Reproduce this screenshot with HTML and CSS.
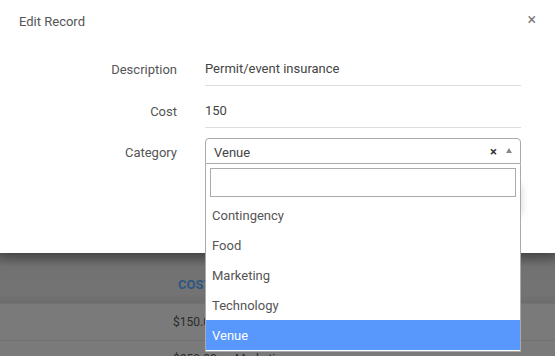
FILE: index.html
```html
<!DOCTYPE html>
<html>
<head>
<meta charset="utf-8">
<link rel="stylesheet" href="styles.css">
</head>
<body>
<div class="screen">
  <div class="modal">
    <div class="modal-header">
      <span class="modal-title">Edit Record</span>
      <span class="modal-close">×</span>
    </div>
    <div class="modal-body">
      <div class="form-row">
        <label class="form-label">Description</label>
        <div class="form-input">Permit/event insurance</div>
      </div>
      <div class="form-row">
        <label class="form-label">Cost</label>
        <div class="form-input">150</div>
      </div>
      <div class="form-row form-row-select">
        <label class="form-label form-label-select">Category</label>
        <div class="select-wrap">
          <div class="select-box">
            <span class="select-value">Venue</span>
            <span class="select-clear">×</span>
            <span class="select-arrow"></span>
          </div>
          <div class="dropdown">
            <div class="dropdown-search"></div>
            <ul class="dropdown-list">
              <li class="dropdown-option">Contingency</li>
              <li class="dropdown-option">Food</li>
              <li class="dropdown-option">Marketing</li>
              <li class="dropdown-option">Technology</li>
              <li class="dropdown-option is-active">Venue</li>
            </ul>
          </div>
        </div>
      </div>
      <div class="modal-footer">
        <div class="save-btn"></div>
      </div>
    </div>
  </div>
  <div class="table">
    <div class="table-head">
      <div class="cell cell-cost head-cost">COST</div>
    </div>
    <div class="table-row">
      <div class="cell cell-cost">$150.00</div>
      <div class="cell cell-cat">Venue</div>
    </div>
    <div class="table-row">
      <div class="cell cell-cost">$250.00</div>
      <div class="cell cell-cat">Marketing</div>
    </div>
  </div>
</div>
</body>
</html>
```
FILE: styles.css
```css
* { box-sizing: border-box; }
html, body { margin: 0; padding: 0; }
body {
  width: 555px;
  height: 356px;
  overflow: hidden;
  font-family: Roboto, "Liberation Sans", Arial, sans-serif;
  font-size: 13px;
  background: #7a7a7a;
}
.screen { position: relative; width: 555px; height: 356px; overflow: hidden; }

.modal {
  position: relative;
  z-index: 2;
  height: 253px;
  background: #fff;
  box-shadow: 0 3px 12px rgba(0,0,0,0.35);
}
.modal-header {
  display: flex;
  justify-content: space-between;
  align-items: center;
  height: 42px;
  padding: 0 19px 0 19px;
}
.modal-title { color: #555; font-size: 13px; }
.modal-close { color: #777; font-size: 16px; margin-top: -4px; margin-right: 0; }

.modal-body { padding-top: 11px; }
.form-row {
  display: grid;
  grid-template-columns: 177px 316px;
  column-gap: 28px;
  align-items: center;
  margin-bottom: 9px;
}
.form-label { text-align: right; color: #555; }
.form-label-select { padding-top: 3px; }
.form-input {
  height: 33px;
  line-height: 32px;
  color: #444;
  border-bottom: 1px solid #ddd;
}
.form-row-select { margin-top: 10px; }

.select-wrap { position: relative; }
.select-box {
  display: flex;
  align-items: center;
  height: 26px;
  padding: 2px 8px 0 8px;
  border: 1px solid #aaa;
  border-radius: 4px 4px 0 0;
  background: #fff;
}
.select-value { flex: 1; color: #444; font-size: 13px; }
.select-clear { color: #333; font-weight: bold; font-size: 13px; margin-right: 9px; margin-top: -2px; }
.select-arrow {
  width: 0; height: 0;
  border-left: 3px solid transparent;
  border-right: 3px solid transparent;
  border-bottom: 5px solid #888;
  margin-bottom: 4px;
}

.dropdown {
  position: absolute;
  z-index: 5;
  left: 0;
  top: 26px;
  width: 316px;
  height: 188px;
  background: #fff;
  border: 1px solid #aaa;
  border-top: none;
}
.dropdown-search {
  margin: 4px 4px 0 4px;
  height: 29px;
  border: 1px solid #aaa;
}
.dropdown-list { list-style: none; margin: 3px 0 0 0; padding: 0; }
.dropdown-option {
  height: 30px;
  line-height: 31px;
  padding-left: 6px;
  color: #555;
  font-size: 13px;
}
.dropdown-option.is-active { background: #5897fb; color: #fff; }

.modal-footer { display: flex; justify-content: flex-end; padding-right: 34px; margin-top: 0; }
.save-btn {
  width: 90px; height: 30px;
  background: #fff;
  box-shadow: 0 2px 8px rgba(0,0,0,0.18);
  margin-top: 10px;
}

.table { position: relative; z-index: 1; }
.table-head {
  height: 51px;
  display: flex;
  align-items: center;
  background: linear-gradient(#5e5e5e 0px, #727272 14px, #737373 40px, #6c6c6c 51px);
  border-bottom: 1px solid #727272;
}
.table-row {
  height: 37px;
  display: flex;
  align-items: center;
  background: #7a7a7a;
  border-bottom: 1px solid #707070;
}
.cell { color: #2a2a2a; font-size: 12px; }
.cell-cost { width: 230px; padding-left: 173px; }
.head-cost { color: #2c5782; font-weight: bold; font-size: 13px; padding-left: 178px; padding-top: 12px; }
.cell-cat { padding-left: 5px; }
```
